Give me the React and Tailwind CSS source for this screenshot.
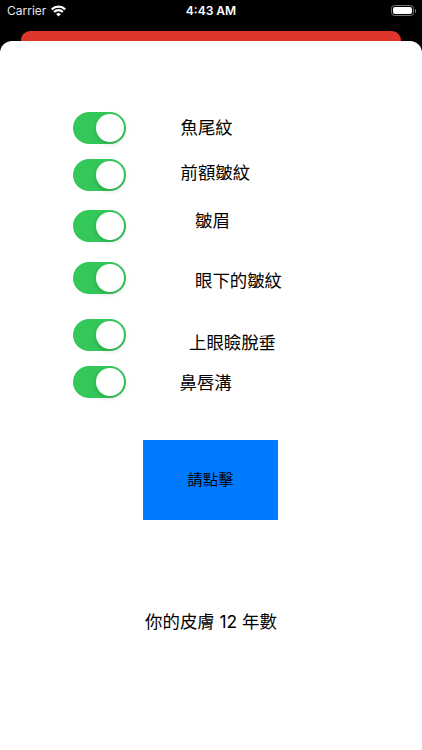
const switches = [
  { id: 'crows-feet', gap: 'mt-0' },
  { id: 'forehead', gap: 'mt-[15px]' },
  { id: 'frown', gap: 'mt-[19px]' },
  { id: 'under-eye', gap: 'mt-5' },
  { id: 'eyelid', gap: 'mt-[25px]' },
  { id: 'nasolabial', gap: 'mt-[15px]' },
]

const labels = [
  { text: '魚尾紋', place: 'mt-1.5' },
  { text: '前額皺紋', place: 'mt-[25px]' },
  { text: '皺眉', place: 'mt-7 ml-[14.5px]' },
  { text: '眼下的皺紋', place: 'mt-10 ml-[14.5px]' },
  { text: '上眼瞼脫垂', place: 'mt-[42px] ml-[8.5px]' },
  { text: '鼻唇溝', place: 'mt-5 -ml-px' },
]

function StatusBar() {
  return (
    <div className="grid h-[22px] grid-cols-3 items-center text-white">
      <div className="flex items-center gap-[5px] pl-[7px]">
        <span className="text-[12px] leading-[22px] text-gray-200">Carrier</span>
        <svg className="-mt-px" width="15" height="12" viewBox="0 0 15 12" fill="none" stroke="white" strokeWidth="2.2">
          <path d="M0.8 4.4 A9.5 9.5 0 0 1 14.2 4.4" />
          <path d="M3.1 7 A6.2 6.2 0 0 1 11.9 7" />
          <path d="M7.5 11.6 L5.1 9.1 A3.4 3.4 0 0 1 9.9 9.1 Z" fill="white" stroke="none" />
        </svg>
      </div>
      <span className="text-center text-[12px] font-semibold leading-[22px]">4:43 AM</span>
      <div className="-mt-px flex items-center justify-end gap-px pr-[6px]">
        <div className="h-[11px] w-[23px] rounded-[3.5px] border border-[#777] p-px">
          <div className="h-full rounded-[2px] bg-white" />
        </div>
        <div className="h-1 w-px rounded-r bg-[#777]" />
      </div>
    </div>
  )
}

function Toggle({ gap }) {
  return (
    <button
      role="switch"
      aria-checked="true"
      className={`flex h-8 w-[53px] shrink-0 items-center justify-end rounded-full bg-[#34c759] pr-[2px] ${gap}`}
    >
      <span className="size-7 rounded-full bg-white shadow-[0_2px_5px_rgba(0,0,0,0.16)]" />
    </button>
  )
}

export default function App() {
  return (
    <div className="flex h-[750px] w-[422px] flex-col overflow-hidden bg-black font-['Inter','Noto_Sans_CJK_TC',sans-serif] text-black">
      <StatusBar />
      <div className="mx-[21px] mt-[9px] h-2.5 shrink-0 rounded-t-[9px] bg-[#e0352b]" />
      <main className="flex flex-1 flex-col items-center rounded-t-[12px] bg-white">
        <div className="flex w-full pt-[71px] pl-[73px]">
          <div className="flex flex-col">
            {switches.map(({ id, gap }) => (
              <Toggle key={id} gap={gap} />
            ))}
          </div>
          <div className="ml-[54.5px] flex flex-col">
            {labels.map(({ text, place }) => (
              <span key={text} className={`text-[17.4px] leading-5 ${place}`}>
                {text}
              </span>
            ))}
          </div>
        </div>
        <button className="mt-[42px] mr-[1px] h-20 w-[135px] bg-[#007aff] text-[15.3px] leading-5">
          請點擊
        </button>
        <p className="mt-[92px] text-[17.4px] leading-5">你的皮膚 12 年數</p>
      </main>
    </div>
  )
}
